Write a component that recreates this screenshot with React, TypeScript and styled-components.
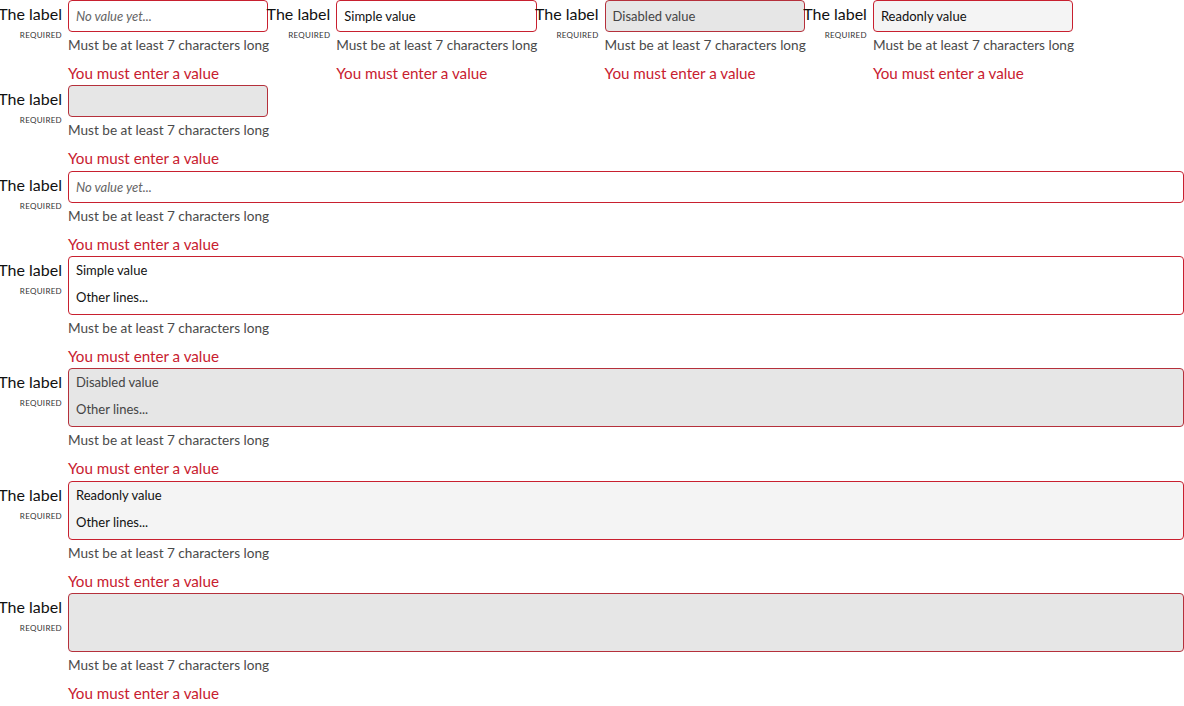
import React from "react";
import styled, { createGlobalStyle, css } from "styled-components";

const Global = createGlobalStyle`
  html, body { margin: 0; padding: 0; background: #fff; }
  body { font-family: "Lato", "Liberation Sans", sans-serif; color: #000; }
  * { box-sizing: border-box; }
`;

const Page = styled.div`
  display: flex;
  flex-wrap: wrap;
  align-items: flex-start;
  width: 1184px;
`;

const Field = styled.div<{ $full?: boolean }>`
  display: flex;
  align-items: flex-start;
  gap: 6px;
  ${(p) => (p.$full ? css`width: 100%;` : css`width: 268.3px;`)}
`;

const LabelCol = styled.div`
  width: 62px;
  flex: none;
  display: flex;
  flex-direction: column;
  align-items: flex-end;
  white-space: nowrap;
`;

const LabelText = styled.label`
  font-size: 16px;
  line-height: 20px;
  margin-top: 4px;
  color: #111;
`;

const Required = styled.span`
  font-size: 8px;
  letter-spacing: 0.3px;
  line-height: 10px;
  margin-top: 6px;
  color: #333;
  text-transform: uppercase;
`;

const Control = styled.div`
  flex: 1;
  min-width: 0;
  display: flex;
  flex-direction: column;
`;

type Variant = "normal" | "disabled" | "readonly";

const boxStyle = css<{ $variant: Variant }>`
  width: 100%;
  border: 1px solid #c8202f;
  border-radius: 4px;
  padding: 0 7px;
  font-family: inherit;
  font-size: 13px;
  color: #111;
  background: #fff;
  outline: none;
  ${(p) =>
    p.$variant === "disabled" &&
    css`
      background: #e6e6e6;
      border-color: #b5303b;
      color: #444;
    `}
  ${(p) =>
    p.$variant === "readonly" &&
    css`
      background: #f4f4f4;
    `}
  &::placeholder {
    font-style: italic;
    color: #666;
  }
`;

const Input = styled.input<{ $variant: Variant }>`
  ${boxStyle};
  height: 32px;
  display: block;
`;

const TextArea = styled.textarea<{ $variant: Variant }>`
  ${boxStyle};
  height: 59px;
  display: block;
  resize: none;
  padding-top: 0;
  padding-bottom: 0;
  line-height: 27px;
  overflow: hidden;
`;

const Help = styled.div`
  font-size: 13.6px;
  line-height: 20px;
  margin-top: 3px;
  color: #4a4a4a;
  white-space: nowrap;
`;

const ErrorText = styled.div`
  font-size: 15.2px;
  line-height: 22px;
  margin-top: 7px;
  margin-bottom: 1.33px;
  color: #c8202f;
  white-space: nowrap;
`;

type FieldProps = {
  full?: boolean;
  multiline?: boolean;
  variant?: Variant;
  value?: string;
  placeholder?: string;
};

function FormField({ full, multiline, variant = "normal", value, placeholder }: FieldProps) {
  const common = {
    $variant: variant,
    disabled: variant === "disabled",
    readOnly: variant === "readonly",
    placeholder,
  };
  return (
    <Field $full={full}>
      <LabelCol>
        <LabelText>The label</LabelText>
        <Required>Required</Required>
      </LabelCol>
      <Control>
        {multiline ? (
          <TextArea {...common} defaultValue={value} />
        ) : (
          <Input {...common} defaultValue={value} />
        )}
        <Help>Must be at least 7 characters long</Help>
        <ErrorText>You must enter a value</ErrorText>
      </Control>
    </Field>
  );
}

export default function App() {
  return (
    <>
      <Global />
      <Page>
        <FormField placeholder="No value yet..." />
        <FormField value="Simple value" />
        <FormField variant="disabled" value="Disabled value" />
        <FormField variant="readonly" value="Readonly value" />
        <FormField variant="disabled" />
        <FormField full placeholder="No value yet..." />
        <FormField full multiline value={"Simple value\nOther lines..."} />
        <FormField full multiline variant="disabled" value={"Disabled value\nOther lines..."} />
        <FormField full multiline variant="readonly" value={"Readonly value\nOther lines..."} />
        <FormField full multiline variant="disabled" />
      </Page>
    </>
  );
}
